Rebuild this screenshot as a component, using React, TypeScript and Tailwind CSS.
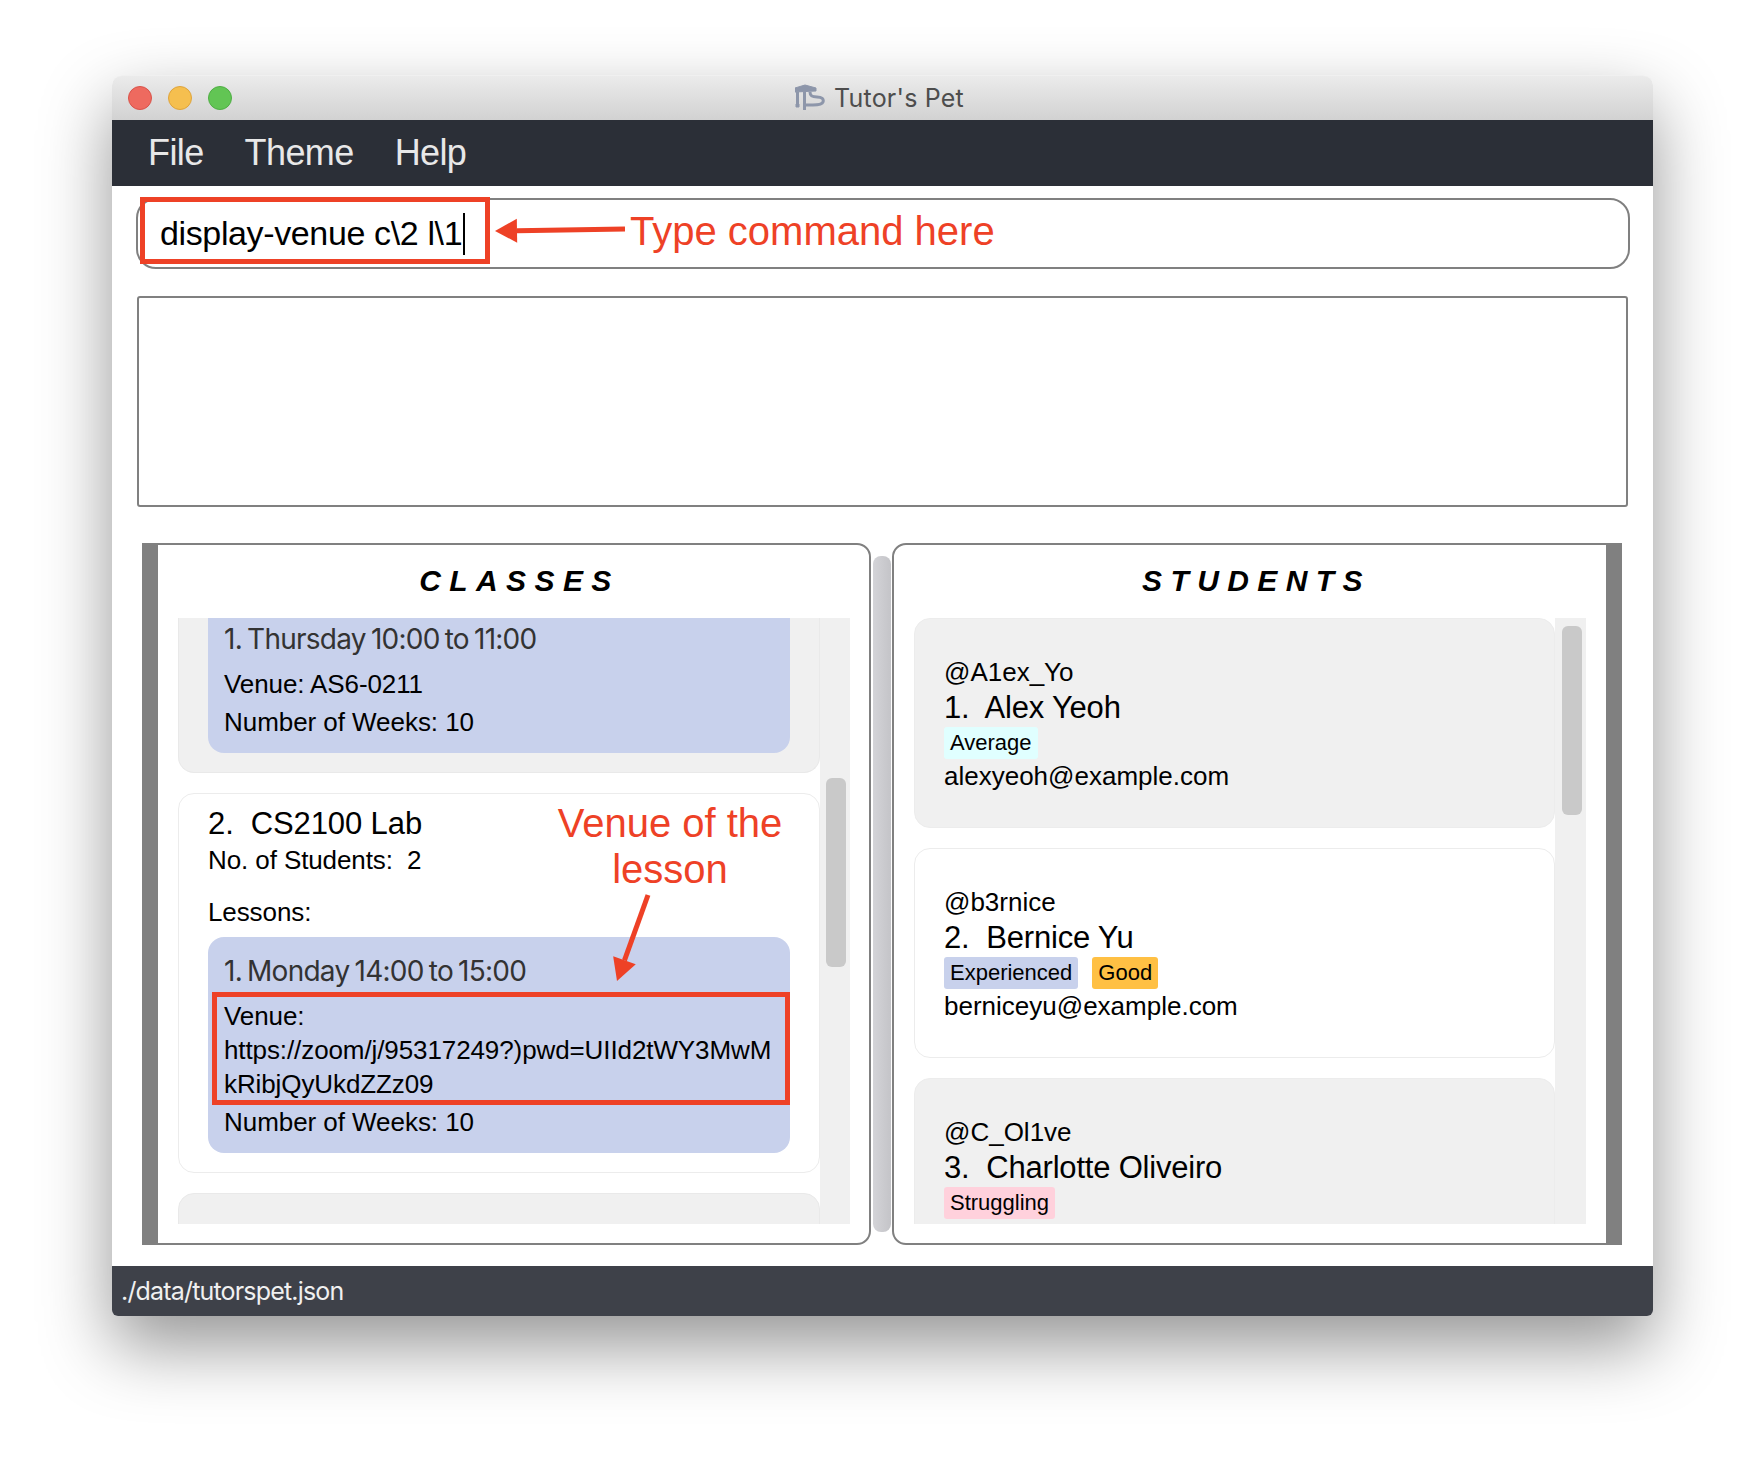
const sans = 'font-["Liberation_Sans",Arial,sans-serif]'
const inter = 'font-["Inter",sans-serif]'

function LessonBox({ title, className = '', children }: { title: string; className?: string; children: React.ReactNode }) {
  return (
    <div className={`w-[582px] bg-[#c8d1ec] rounded-[16px] px-4 ${className}`}>
      <p className={`${inter} h-[45px] leading-[45px] text-[28px] tracking-[-0.75px] [word-spacing:-2px] text-[#333]`}>{title}</p>
      <div className="text-[26px] leading-[34px] tracking-[-0.1px] text-black">{children}</div>
      <p className="h-[38px] leading-[38px] mt-[2px] text-[26px] tracking-[-0.05px] text-black">Number of Weeks: 10</p>
    </div>
  )
}

function StudentCard({ handle, index, name, email, tags, odd, clip }: {
  handle: string
  index: number
  name: string
  email?: string
  tags: { label: string; color: string }[]
  odd: boolean
  clip?: boolean
}) {
  return (
    <div className={`w-[641px] shrink-0 rounded-[16px] border border-[#ececec] pl-[29px] pt-[35px] ${clip ? 'h-[220px]' : 'h-[210px]'} ${odd ? 'bg-[#f0f0f0]' : 'bg-white'}`}>
      <p className="h-[36px] leading-[36px] text-[26px]">{handle}</p>
      <p className="h-[36px] leading-[36px] text-[31px] tracking-[-0.2px] whitespace-pre">{`${index}.  ${name}`}</p>
      <div className="flex gap-[14px] h-[32px] mt-[1px]">
        {tags.map(t => (
          <span key={t.label} className={`${t.color} rounded-[3px] px-[6px] h-[32px] leading-[32px] text-[22px]`}>{t.label}</span>
        ))}
      </div>
      {email && <p className="h-[36px] leading-[36px] -mt-[1px] text-[26px]">{email}</p>}
    </div>
  )
}

function Arrow({ x1, y1, x2, y2 }: { x1: number; y1: number; x2: number; y2: number }) {
  const a = Math.atan2(y2 - y1, x2 - x1)
  const bx = x2 - Math.cos(a) * 22
  const by = y2 - Math.sin(a) * 22
  const nx = -Math.sin(a) * 12
  const ny = Math.cos(a) * 12
  return (
    <>
      <line x1={x1} y1={y1} x2={bx} y2={by} stroke="#ee4126" strokeWidth="5" />
      <polygon points={`${x2},${y2} ${bx + nx},${by + ny} ${bx - nx},${by - ny}`} fill="#ee4126" />
    </>
  )
}

export default function App() {
  return (
    <div className={`${sans} relative w-[1764px] h-[1464px] bg-white pt-[75px] pl-[112px] overflow-hidden text-black`}>
      <div className="w-[1541px] h-[1241px] flex flex-col rounded-t-[10px] rounded-b-[6px] bg-white shadow-[0_30px_70px_rgba(0,0,0,0.42)]">
        {/* Title bar */}
        <div className="relative h-[45px] shrink-0 rounded-t-[10px] border-t border-[#f0f0f0] bg-gradient-to-b from-[#ebebeb] to-[#d2d2d2] flex items-center justify-center">
          <div className="absolute left-[16px] top-[10px] flex gap-[16px]">
            <span className="w-[24px] h-[24px] rounded-full bg-[#ee6a5f] border border-[#d9534a]" />
            <span className="w-[24px] h-[24px] rounded-full bg-[#f5bf4f] border border-[#dfa43c]" />
            <span className="w-[24px] h-[24px] rounded-full bg-[#62c554] border border-[#4fae44]" />
          </div>
          <div className="flex items-center gap-[9px] ml-[-6px]">
            <svg width="30" height="28" viewBox="0 0 30 28" fill="none" stroke="#8d96aa" strokeWidth="3">
              <path d="M0 4 L10 1 L21 4 L21 7 L0 8 Z" fill="#8d96aa" strokeWidth="1" />
              <path d="M2.5 8 V20" />
              <path d="M1 20 h3 v3 h-3 z" fill="#8d96aa" strokeWidth="1" />
              <path d="M9.5 8 V26" />
              <path d="M15 8 C15 13 19 13 22 13 C27 13 29 15 28 18 C27 21 22 21 18 21 H10" />
            </svg>
            <span className={`${inter} text-[25px] leading-none tracking-[0.2px] text-[#4d4d4d]`}>Tutor's Pet</span>
          </div>
        </div>

        {/* Menu bar */}
        <div className="h-[66px] shrink-0 bg-[#2b2f37] flex items-center pl-[36px] gap-[41px] text-[36px] tracking-[-0.6px] text-[#e8e8e8]">
          <span>File</span>
          <span>Theme</span>
          <span>Help</span>
        </div>

        {/* Content */}
        <div className="flex-1 flex flex-col min-h-0 pt-[12px]">
          <div className="ml-[24px] w-[1494px] h-[71px] shrink-0 rounded-[20px] border-2 border-[#808080] flex items-center pl-[22px]">
            <span className="text-[34px] tracking-[-0.37px]">display-venue c\2 l\1</span>
            <span className="w-[2px] h-[42px] bg-black ml-[1px]" />
          </div>
          <div className="ml-[25px] mt-[27px] w-[1491px] h-[211px] shrink-0 rounded-[3px] border-2 border-[#808080]" />

          <div className="ml-[30px] mt-[36px] flex h-[702px]">
            {/* Classes */}
            <div className="w-[729px] h-full border-y-2 border-r-2 border-l-[16px] border-[#808080] rounded-r-[14px] flex flex-col pl-[20px] pr-[19px]">
              <h2 className="h-[73px] shrink-0 flex items-center justify-center pl-[11px] pb-[3px] text-[30px] font-bold italic tracking-[8.4px]">CLASSES</h2>
              <div className="flex h-[606px] overflow-hidden">
                <div className="w-[642px] flex flex-col gap-[20px]">
                  <div className="h-[155px] shrink-0 bg-[#f0f0f0] rounded-b-[16px] border-b border-x border-[#e9e9e9] pl-[29px]">
                    <LessonBox title="1. Thursday 10:00 to 11:00" className="rounded-t-none h-[136px] -mt-[1px]">
                      <p className="h-[36px] leading-[38px] mt-[3px]">Venue: AS6-0211</p>
                    </LessonBox>
                  </div>
                  <div className="h-[380px] shrink-0 bg-white rounded-[16px] border border-[#ececec] pl-[29px] pt-[12px]">
                    <p className="h-[36px] leading-[36px] text-[31px] tracking-[-0.1px] whitespace-pre">2.  CS2100 Lab</p>
                    <p className="h-[36px] leading-[36px] text-[26px] tracking-[-0.1px] whitespace-pre">No. of Students:  2</p>
                    <p className="h-[36px] leading-[36px] mt-[16px] text-[26px] tracking-[-0.1px]">Lessons:</p>
                    <LessonBox title="1. Monday 14:00 to 15:00" className="mt-[7px] pt-[12px] pb-[12px]">
                      <p className="mt-[5px]">Venue:</p>
                      <p className="whitespace-nowrap">https://zoom/j/95317249?)pwd=UIId2tWY3MwM</p>
                      <p>kRibjQyUkdZZz09</p>
                    </LessonBox>
                  </div>
                  <div className="h-[60px] shrink-0 bg-[#f0f0f0] rounded-t-[16px] border border-[#e9e9e9]" />
                </div>
                <div className="w-[30px] bg-[#f0f0f0] pt-[160px] pl-[6px]">
                  <div className="w-[20px] h-[189px] rounded-[6px] bg-[#c9c9c9]" />
                </div>
              </div>
            </div>

            {/* Divider */}
            <div className="w-[18px] h-[676px] mt-[13px] ml-[2px] mr-[1px] rounded-[8px] bg-gradient-to-r from-[#d4d4d8] to-[#c4c4c8]" />

            {/* Students */}
            <div className="w-[730px] h-full border-y-2 border-l-2 border-r-[16px] border-[#808080] rounded-l-[14px] flex flex-col pl-[20px] pr-[20px]">
              <h2 className="h-[73px] shrink-0 flex items-center justify-center pl-[13px] pb-[3px] text-[30px] font-bold italic tracking-[8.4px]">STUDENTS</h2>
              <div className="flex h-[606px] overflow-hidden">
                <div className="w-[641px] flex flex-col gap-[20px]">
                  <StudentCard odd handle="@A1ex_Yo" index={1} name="Alex Yeoh" email="alexyeoh@example.com" tags={[{ label: 'Average', color: 'bg-[#e0ffff]' }]} />
                  <StudentCard odd={false} handle="@b3rnice" index={2} name="Bernice Yu" email="berniceyu@example.com" tags={[{ label: 'Experienced', color: 'bg-[#c8d1ec]' }, { label: 'Good', color: 'bg-[#ffc044]' }]} />
                  <StudentCard odd clip handle="@C_Ol1ve" index={3} name="Charlotte Oliveiro" tags={[{ label: 'Struggling', color: 'bg-[#ffd1dc]' }]} />
                </div>
                <div className="w-[31px] bg-[#f0f0f0] pt-[8px] pl-[7px]">
                  <div className="w-[20px] h-[189px] rounded-[6px] bg-[#c9c9c9]" />
                </div>
              </div>
            </div>
          </div>
        </div>

        {/* Status bar */}
        <div className={`${inter} h-[50px] shrink-0 rounded-b-[6px] bg-[#3e4149] flex items-center pl-[9px] pt-[1px] text-[25px] tracking-[-0.82px] text-[#f0f0f0]`}>./data/tutorspet.json</div>
      </div>

      {/* Annotations */}
      <div className="absolute left-[140px] top-[197px] w-[350px] h-[67px] border-[5px] border-[#ee4126]" />
      <div className="absolute left-[212px] top-[992px] w-[578px] h-[113px] border-[5px] border-[#ee4126]" />
      <svg className="absolute left-0 top-0" width="1764" height="1464">
        <Arrow x1={625} y1={229} x2={495} y2={231} />
        <Arrow x1={648} y1={895} x2={617} y2={981} />
      </svg>
      <span className="absolute left-[630px] top-[207px] text-[40px] leading-[48px] text-[#ee4126]">Type command here</span>
      <div className="absolute left-[540px] top-[800px] w-[260px] text-center text-[40px] leading-[46px] text-[#ee4126]">
        <p>Venue of the</p>
        <p>lesson</p>
      </div>
    </div>
  )
}
